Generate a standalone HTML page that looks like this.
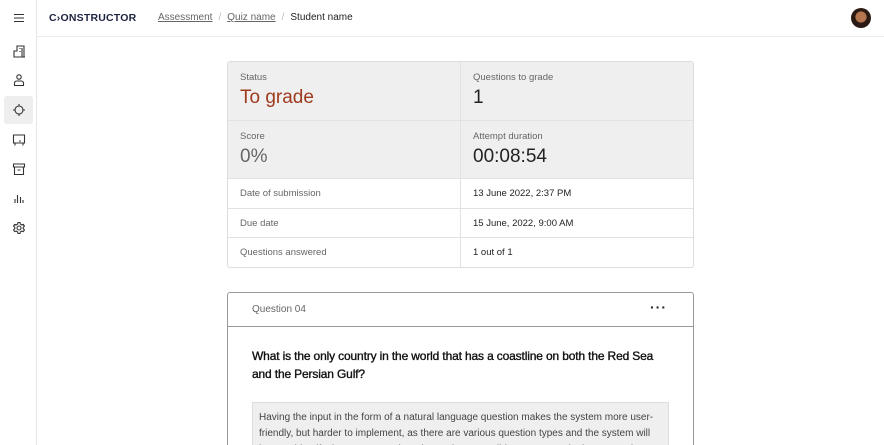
<!DOCTYPE html>
<html><head><style>
*{box-sizing:border-box;margin:0;padding:0}
html,body{width:884px;height:445px;overflow:hidden}
body{background:#fff;font-family:"Liberation Sans",sans-serif;color:#222;position:relative}
.side{position:absolute;left:0;top:0;width:37px;height:445px;border-right:1px solid #e6e6e6}
.hdr{position:absolute;left:37px;top:0;right:0;height:37px;border-bottom:1px solid #ececec}
.ic{position:absolute;left:4px;width:29px;height:28px;display:flex;align-items:center;justify-content:center}
.ic svg{width:14px;height:14px;fill:none;stroke:#333;stroke-width:1.1}
.logo{position:absolute;left:12px;top:12px;font-size:10.5px;font-weight:bold;color:#1c2340;letter-spacing:0.2px}
.bc{position:absolute;left:121px;top:12px;font-size:10px;color:#666}
.bc u{text-decoration:underline;color:#666}
.bc .s{color:#bbb;margin:0 6px}
.bc b{font-weight:normal;color:#222}
.av{position:absolute;top:8px;width:20px;height:20px;border-radius:50%;background:radial-gradient(circle at 50% 45%,#b5764f 0 35%,#2b1a14 40%)}
.card{position:absolute;left:227px;top:61px;width:467px;height:207px;border:1px solid #ddd;border-radius:3px;overflow:hidden}
.row{position:absolute;left:0;right:0;border-bottom:1px solid #e2e2e2}
.row .c{position:absolute;top:0;bottom:0}
.l{left:0;width:233px;border-right:1px solid #e2e2e2;padding-left:12px}
.r{left:233px;right:0;padding-left:12px}
.lab{font-size:9.5px;color:#666;margin-top:10px}
.big{font-size:19px;margin-top:4px}
.sm{font-size:9.5px;line-height:29px}
.q{position:absolute;left:227px;top:292px;width:467px;height:153px;border:1px solid #999;border-bottom:none;border-radius:3px 3px 0 0;overflow:hidden}
.qh{height:34px;border-bottom:1px solid #999;font-size:10px;color:#666;padding:11px 0 0 24px;position:relative}
.qt{font-size:12px;color:#111;line-height:17.5px;margin:21px 24px 0 24px;-webkit-text-stroke:0.35px #111;letter-spacing:-0.15px}
.ans{margin:19px 24px 0 24px;background:#efefef;border:1px solid #ddd;padding:7px 6px;font-size:10px;line-height:16px;color:#444}
</style></head><body>
<div class="side">
<div class="ic" style="top:4px"><svg viewBox="0 0 14 14"><path d="M2 3.5h10M2 7h10M2 10.5h10"/></svg></div>
<div class="ic" style="top:37px"><svg viewBox="0 0 14 14"><path d="M2 13V7h3V2h7v11zM8 4v1M8 7v1M10 4v9M2 13h11"/></svg></div>
<div class="ic" style="top:66px"><svg viewBox="0 0 14 14"><circle cx="7" cy="4" r="2.2"/><path d="M2.5 12.5V10c0-1 1-2 2-2h5c1 0 2 1 2 2v2.5z"/></svg></div>
<div class="ic" style="top:96px;background:#eee;border-radius:3px"><svg viewBox="0 0 14 14"><circle cx="7" cy="7" r="4"/><path d="M7 1v2M7 11v2M1 7h2M11 7h2"/></svg></div>
<div class="ic" style="top:126px"><svg viewBox="0 0 14 14"><path d="M1.5 2h11v8h-11zM3 10v2.5M11 10v2.5M7 8h2"/></svg></div>
<div class="ic" style="top:155px"><svg viewBox="0 0 14 14"><path d="M1.5 2h11v3h-11zM2.5 5v7.5h9V5M5.5 8h3"/></svg></div>
<div class="ic" style="top:184px"><svg viewBox="0 0 14 14"><path d="M3 12V8M5.5 12V4M8.5 12V6M11 12V9"/></svg></div>
<div class="ic" style="top:214px"><svg viewBox="0 0 14 14"><circle cx="7" cy="7" r="2"/><path d="M6 1.5h2l.4 1.6 1.4.8 1.6-.5 1 1.7-1.2 1.2v1.4l1.2 1.2-1 1.7-1.6-.5-1.4.8L8 12.5H6l-.4-1.6-1.4-.8-1.6.5-1-1.7 1.2-1.2V6.3L1.6 5.1l1-1.7 1.6.5 1.4-.8z"/></svg></div>
</div>
<div class="hdr">
<div class="logo">C›ONSTRUCTOR</div>
<div class="bc"><u>Assessment</u><span class="s">/</span><u>Quiz name</u><span class="s">/</span><b>Student name</b></div>
<div class="av" style="left:814px"></div>
</div>
<div class="card">
<div class="row" style="top:0;height:59px;background:#efefef"><div class="c l"><div class="lab">Status</div><div class="big" style="color:#9e3a1e">To grade</div></div><div class="c r"><div class="lab">Questions to grade</div><div class="big">1</div></div></div>
<div class="row" style="top:59px;height:58px;background:#efefef"><div class="c l"><div class="lab">Score</div><div class="big" style="color:#666">0%</div></div><div class="c r"><div class="lab">Attempt duration</div><div class="big">00:08:54</div></div></div>
<div class="row" style="top:117px;height:30px"><div class="c l sm" style="color:#666">Date of submission</div><div class="c r sm">13 June 2022, 2:37 PM</div></div>
<div class="row" style="top:147px;height:29px"><div class="c l sm" style="color:#666">Due date</div><div class="c r sm">15 June, 2022, 9:00 AM</div></div>
<div class="row" style="top:176px;height:31px;border:none"><div class="c l sm" style="color:#666">Questions answered</div><div class="c r sm">1 out of 1</div></div>
</div>
<div class="q">
<div class="qh">Question 04<span style="position:absolute;right:26px;top:6px;font-size:14px;color:#222;font-weight:bold;letter-spacing:1px">···</span></div>
<div class="qt">What is the only country in the world that has a coastline on both the Red Sea and the Persian Gulf?</div>
<div class="ans">Having the input in the form of a natural language question makes the system more user-friendly, but harder to implement, as there are various question types and the system will have to identify the correct one in order to give a sensible answer. Assigning a question type</div>
</div>
</body></html>
